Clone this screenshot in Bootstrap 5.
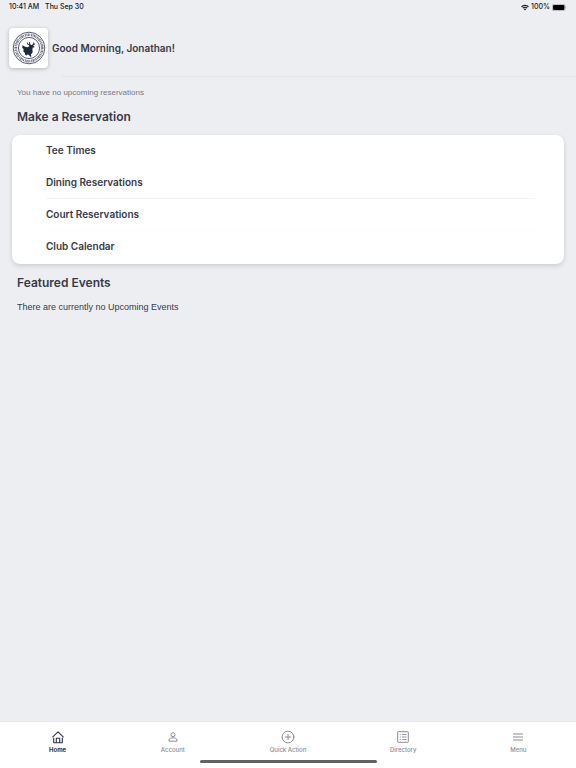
<!DOCTYPE html>
<html lang="en">
<head>
<meta charset="utf-8">
<meta name="viewport" content="width=device-width, initial-scale=1">
<title>Club Home</title>
<link href="https://cdn.jsdelivr.net/npm/bootstrap@5.3.0/dist/css/bootstrap.min.css" rel="stylesheet">
<style>
body{font-family:Inter,"Liberation Sans",sans-serif;background:#edeef2;color:#363a48;font-size:9px;line-height:12px}
.status-bar{font-size:7px;line-height:14px;padding:0 9px;color:#15161b;font-weight:500}
.status-group{gap:6px}
.status-icons{gap:2px}
.greeting{padding:14px 9px 8px;gap:4px}
.crest{width:39px;height:40px;border-radius:4px;background:#fff;box-shadow:0 1px 4px rgba(0,0,0,.24)}
.greeting h1{font-size:10px;line-height:16px;font-weight:600}
.rule{height:1px;margin-left:62px;background:#e4e5e9}
.notice,.empty-text{font-family:"Liberation Sans",Arial,sans-serif}
.notice{font-size:8px;line-height:12px;color:#777a83;padding:10px 17px}
.empty-text{padding:10px 17px;font-size:9px}
.section-title{font-size:12px;line-height:16px;font-weight:600;padding:0 17px}
.choices{margin:10px 12px 11px;padding:0 29px 1px 34px;border-radius:8px;background:#fff;box-shadow:0 2px 5px rgba(0,0,0,.14)}
.choices a{font-size:10px;line-height:30px;height:32px;font-weight:600;color:#363a48;border-bottom:1px solid transparent}
.choices li:nth-child(2) a{border-color:#f3f3f5}
.choices li:nth-child(3) a{border-color:#fcfcfd}
.tabs{background:#fff;padding-top:7px;box-shadow:0 -1px 1px rgba(0,0,0,.02)}
.tabs a{font-size:6px;line-height:8px;font-weight:500;color:#898c94}
.tabs a.active{color:#303442;font-weight:700}
.tabs svg{width:16px;height:16px;margin-bottom:1px}
.home-bar{width:177px;height:3px;border-radius:2px;background:#626262;margin:6px auto 5px}
</style>
<script src="https://cdn.jsdelivr.net/npm/bootstrap@5.3.0/dist/js/bootstrap.bundle.min.js"></script>
</head>
<body class="min-vh-100 d-flex flex-column">
<div class="status-bar d-flex justify-content-between">
  <div class="status-group d-flex"><span>10:41 AM</span><span>Thu Sep 30</span></div>
  <div class="status-icons d-flex align-items-center">
    <svg width="8" height="7" viewBox="0 0 16 12" fill="none" stroke="currentColor" stroke-width="2.4" aria-hidden="true"><path d="M1 4.500a10 10 0 0 1 14 0M3.600 7.300a6.200 6.200 0 0 1 8.800 0"/><path d="M5.500 9.200a3.500 3.500 0 0 1 5 0L8 12z" fill="currentColor" stroke="none"/></svg>
    <span>100%</span>
    <svg width="15" height="7" viewBox="0 0 15 7" aria-hidden="true"><rect x=".3" y=".3" width="12.8" height="6.400" rx="1.800" fill="none" stroke="#888a90" stroke-width=".6"/><rect x="1" y="1" width="11.400" height="5" rx="1.200" fill="#000"/><path d="M13.700 2.400q1 .9 0 2z" fill="#888a90"/></svg>
  </div>
</div>
<header class="greeting d-flex align-items-center">
  <div class="crest d-flex align-items-center justify-content-center">
    <svg width="34" height="34" viewBox="0 0 34 34" fill="none" role="img" aria-label="Club crest">
      <g stroke="#30354f"><circle cx="17" cy="17" r="15.800" stroke-width=".8"/><circle cx="17" cy="17" r="10.600" stroke-width=".8"/><circle cx="17" cy="17" r="13.200" stroke-width="2.600" stroke-dasharray="1 .6 .7 .5 1.3 .6 .8 .9" opacity=".72"/></g>
      <path fill="#202743" d="M10.300 14.200l2.300 1.300 2.800.8 2-1.100-.4-1.300-1.500-.5-.8-2 .8-.1.700 1.400 1 .3-.2-1.800.7-.1.700 2.300 1.200.6 1.300-.7.100-1.900.8.100-.1 1.600 1.100-.9.500.5-1.400 1.500-1 .6 1.700.9-.4.800-1.500.1-.3 2.500.3 1.800-.9 1.600-.9.700.5 2.200-1.100.3-1.600-2-1.500-.1-.5 1-1.500-.5-.3-2.100-1.500-1.600.2-2.300-1.300-1.200z"/>
    </svg>
  </div>
  <h1 class="mb-0">Good Morning, Jonathan!</h1>
</header>
<div class="rule"></div>
<main class="flex-grow-1">
  <p class="notice mb-0">You have no upcoming reservations</p>
  <h2 class="section-title mb-0">Make a Reservation</h2>
  <ul class="choices list-unstyled">
    <li><a href="#tee" class="d-block text-decoration-none">Tee Times</a></li>
    <li><a href="#dining" class="d-block text-decoration-none">Dining Reservations</a></li>
    <li><a href="#court" class="d-block text-decoration-none">Court Reservations</a></li>
    <li><a href="#calendar" class="d-block text-decoration-none">Club Calendar</a></li>
  </ul>
  <h2 class="section-title mb-0">Featured Events</h2>
  <p class="empty-text mb-0">There are currently no Upcoming Events</p>
</main>
<footer class="tabs sticky-bottom">
  <nav class="row row-cols-5 g-0 text-center" aria-label="Main">
    <a href="#home" class="col d-flex flex-column align-items-center text-decoration-none active" aria-current="page"><svg viewBox="0 0 16 16" fill="none" stroke="currentColor" stroke-width="1.100" stroke-linejoin="round" stroke-linecap="round" aria-hidden="true"><path d="M2.800 7.800L8 2.800l5.200 5M3.700 9v4.700h8.600V9M6.300 13.500V9.300h3.400v4.200"/></svg>Home</a>
    <a href="#account" class="col d-flex flex-column align-items-center text-decoration-none"><svg viewBox="0 0 16 16" fill="none" stroke="currentColor" aria-hidden="true"><circle cx="8" cy="5.700" r="2"/><path d="M4 12.200v-1.300c0-1.300 2-2.100 4-2.100s4 .8 4 2.100v1.300z"/></svg>Account</a>
    <a href="#quick" class="col d-flex flex-column align-items-center text-decoration-none"><svg viewBox="0 0 16 16" fill="none" stroke="currentColor" stroke-linecap="round" aria-hidden="true"><circle cx="8" cy="8" r="5.900"/><path d="M8 5.300v5.400M5.300 8h5.400"/></svg>Quick Action</a>
    <a href="#directory" class="col d-flex flex-column align-items-center text-decoration-none"><svg viewBox="0 0 16 16" fill="none" stroke="currentColor" aria-hidden="true"><rect x="2.700" y="2.700" width="10.600" height="10.600" rx=".5"/><path d="M4.800 5.500h1M7 5.500h4.500M4.800 8h1M7 8h4.500M4.800 10.500h1M7 10.500h4.500" stroke-width=".9"/></svg>Directory</a>
    <a href="#menu" class="col d-flex flex-column align-items-center text-decoration-none"><svg viewBox="0 0 16 16" fill="none" stroke="currentColor" stroke-width="1.100" aria-hidden="true"><path d="M3 5h10M3 8h10M3 11h10"/></svg>Menu</a>
  </nav>
  <div class="home-bar"></div>
</footer>
</body>
</html>
